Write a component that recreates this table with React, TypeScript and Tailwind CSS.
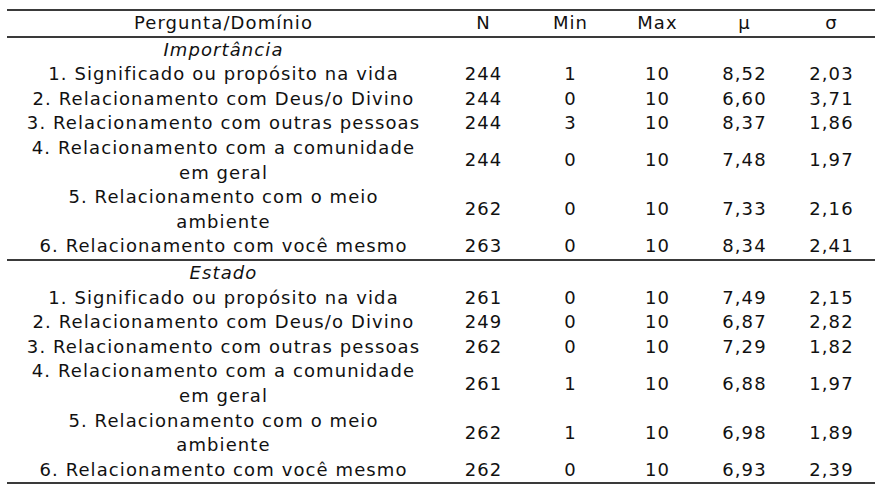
import React from 'react';

type Row = { q: React.ReactNode; n: number; min: number; max: number; mean: string; sd: string };

const importancia: Row[] = [
  { q: '1. Significado ou propósito na vida', n: 244, min: 1, max: 10, mean: '8,52', sd: '2,03' },
  { q: '2. Relacionamento com Deus/o Divino', n: 244, min: 0, max: 10, mean: '6,60', sd: '3,71' },
  { q: '3. Relacionamento com outras pessoas', n: 244, min: 3, max: 10, mean: '8,37', sd: '1,86' },
  { q: <>4. Relacionamento com a comunidade<br />em geral</>, n: 244, min: 0, max: 10, mean: '7,48', sd: '1,97' },
  { q: <>5. Relacionamento com o meio<br />ambiente</>, n: 262, min: 0, max: 10, mean: '7,33', sd: '2,16' },
  { q: '6. Relacionamento com você mesmo', n: 263, min: 0, max: 10, mean: '8,34', sd: '2,41' },
];

const estado: Row[] = [
  { q: '1. Significado ou propósito na vida', n: 261, min: 0, max: 10, mean: '7,49', sd: '2,15' },
  { q: '2. Relacionamento com Deus/o Divino', n: 249, min: 0, max: 10, mean: '6,87', sd: '2,82' },
  { q: '3. Relacionamento com outras pessoas', n: 262, min: 0, max: 10, mean: '7,29', sd: '1,82' },
  { q: <>4. Relacionamento com a comunidade<br />em geral</>, n: 261, min: 1, max: 10, mean: '6,88', sd: '1,97' },
  { q: <>5. Relacionamento com o meio<br />ambiente</>, n: 262, min: 1, max: 10, mean: '6,98', sd: '1,89' },
  { q: '6. Relacionamento com você mesmo', n: 262, min: 0, max: 10, mean: '6,93', sd: '2,39' },
];

function Section({ title, rows, last }: { title: string; rows: Row[]; last?: boolean }) {
  return (
    <tbody className={last ? '' : 'border-b-2 border-[#3a3a3a]'}>
      <tr>
        <td className="p-0 italic">{title}</td>
        <td colSpan={5} />
      </tr>
      {rows.map((r, i) => (
        <tr key={i}>
          <td className="p-0">{r.q}</td>
          <td className="p-0">{r.n}</td>
          <td className="p-0">{r.min}</td>
          <td className="p-0">{r.max}</td>
          <td className="p-0">{r.mean}</td>
          <td className="p-0">{r.sd}</td>
        </tr>
      ))}
    </tbody>
  );
}

export default function App() {
  return (
    <div className="w-[886px] h-[489px] bg-white pt-[9px] pl-[7px]">
      <table className="w-[868px] table-fixed border-collapse border-y-2 border-[#3a3a3a] text-center text-[18px] leading-[24.6px] tracking-[1.1px] text-[#111] font-['DejaVu_Sans',sans-serif]">
        <colgroup>
          <col className="w-[433px]" />
          <col className="w-[87px]" />
          <col className="w-[87px]" />
          <col className="w-[87px]" />
          <col className="w-[87px]" />
          <col className="w-[87px]" />
        </colgroup>
        <thead className="border-b-2 border-[#3a3a3a]">
          <tr className="h-[23px]">
            <th className="p-0 font-normal">Pergunta/Domínio</th>
            <th className="p-0 font-normal">N</th>
            <th className="p-0 font-normal">Min</th>
            <th className="p-0 font-normal">Max</th>
            <th className="p-0 font-normal">μ</th>
            <th className="p-0 font-normal">σ</th>
          </tr>
        </thead>
        <Section title="Importância" rows={importancia} />
        <Section title="Estado" rows={estado} last />
      </table>
    </div>
  );
}
